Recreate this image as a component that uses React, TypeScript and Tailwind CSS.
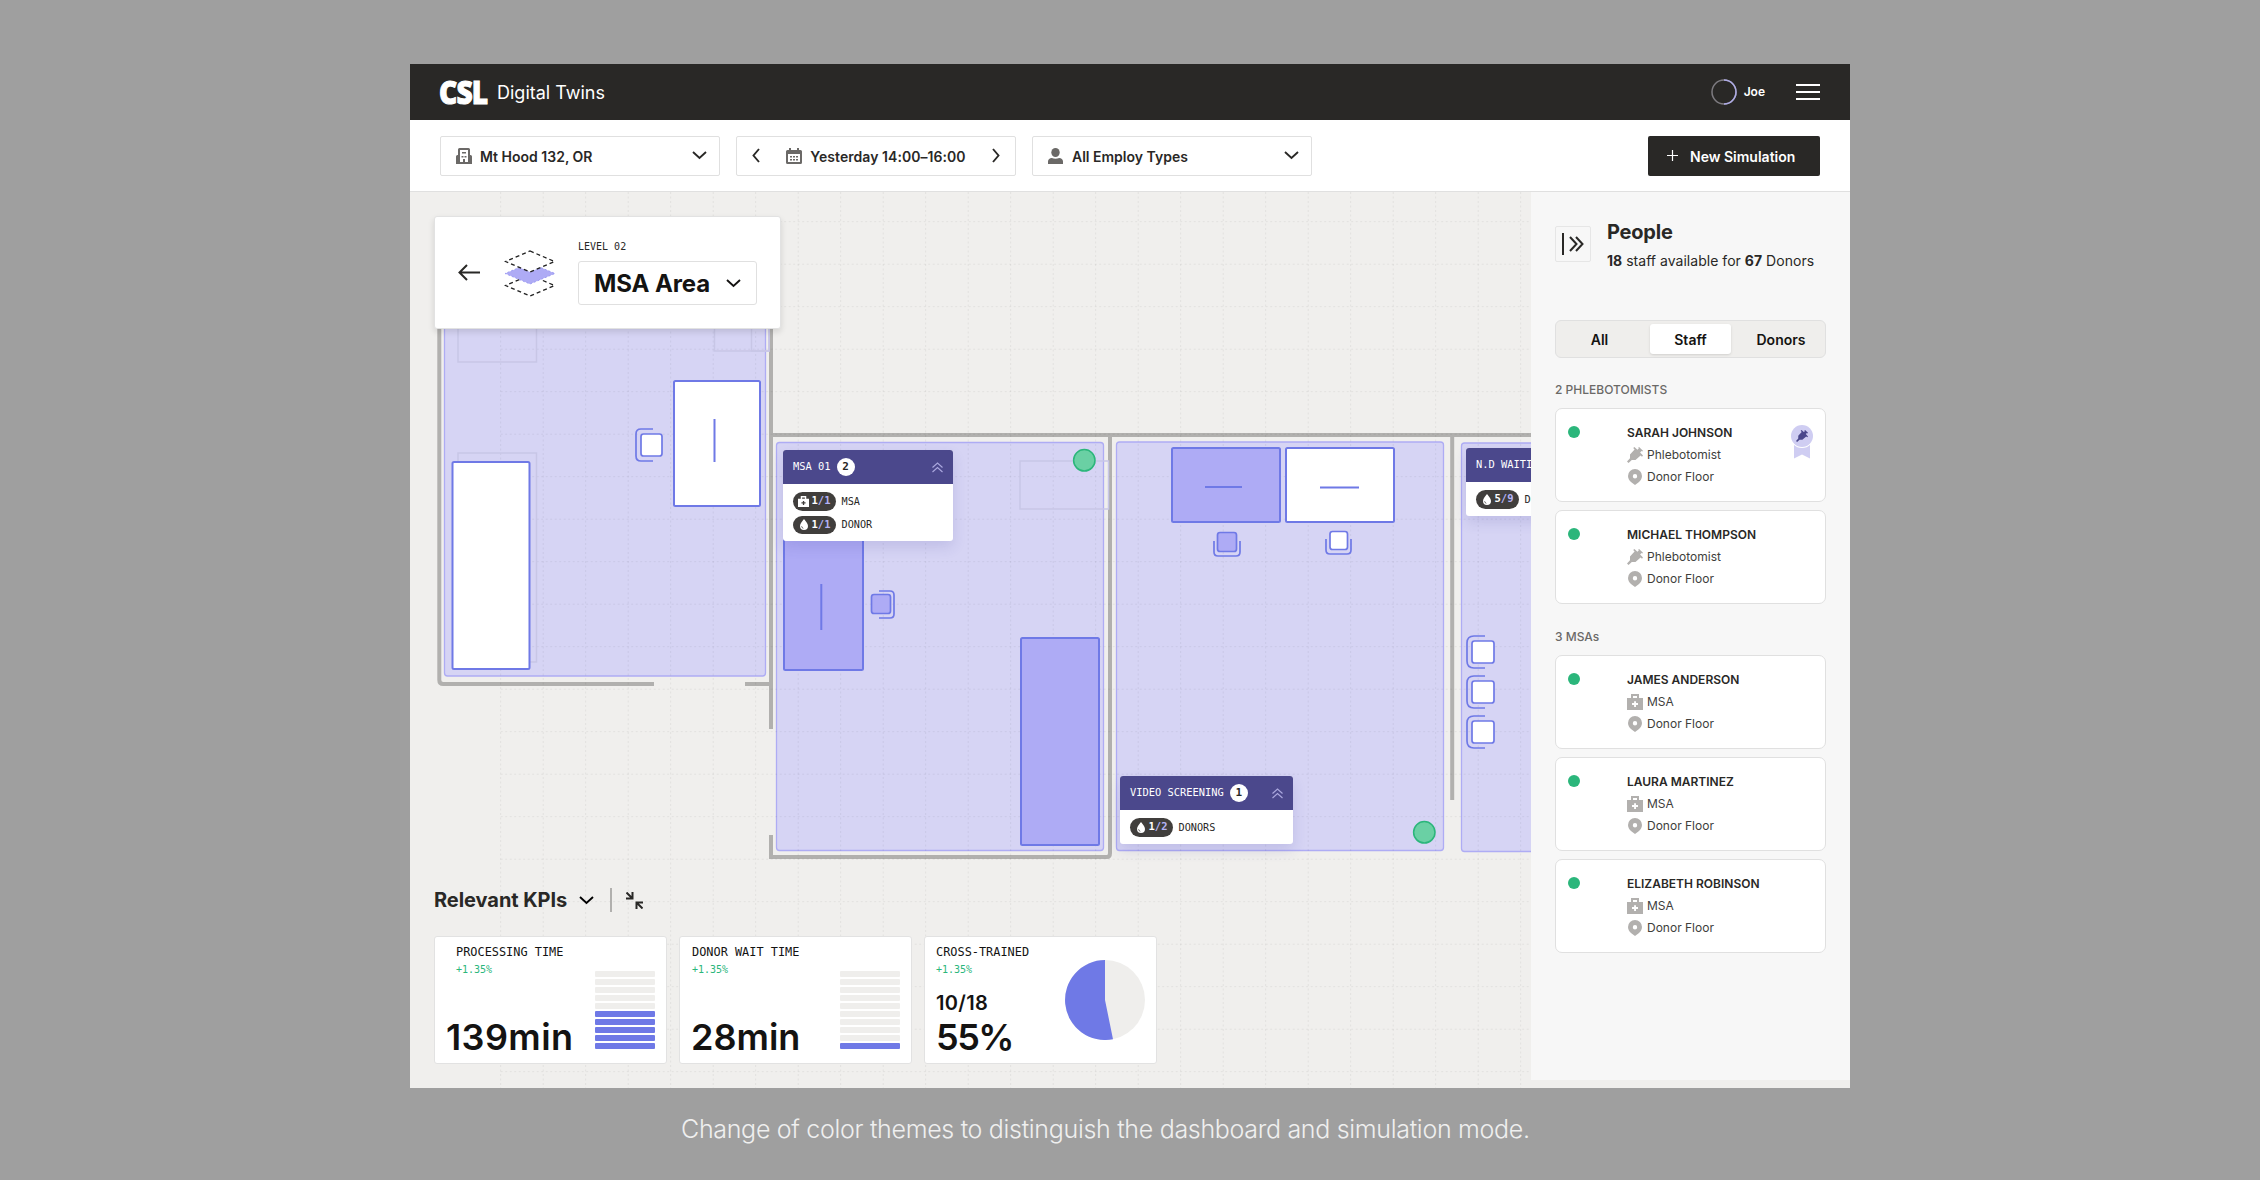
import type { ReactNode } from "react";

const MONO = "font-['DejaVu_Sans_Mono',monospace]";

/* ---------- icons ---------- */

function Chevron({ className = "", d = "M1 1l6.5 6L14 1" }: { className?: string; d?: string }) {
  return (
    <svg className={className} width="15" height="9" viewBox="0 0 15 9" fill="none" stroke="currentColor" strokeWidth="1.900">
      <path d={d} />
    </svg>
  );
}

function BuildingIcon() {
  return (
    <svg width="16" height="16" viewBox="0 0 16 16" fill="#6b6967">
      <path fillRule="evenodd" d="M3.500 0h9A1.500 1.500 0 0 1 14 1.500V7h.5A1.500 1.500 0 0 1 16 8.500V16H0V8.500A1.500 1.500 0 0 1 1.500 7H2V1.500A1.500 1.500 0 0 1 3.500 0zM4 2v12h3v-3h2v3h3V2H4z" />
      <path d="M6 4h4v1.500H6zM5.500 8h2v1.500h-2zM8.500 8h2v1.500h-2z" />
    </svg>
  );
}

function CalendarIcon() {
  return (
    <svg width="16" height="16" viewBox="0 0 16 16" fill="#6b6967">
      <path fillRule="evenodd" d="M3 0h2v2h6V0h2v2h1.500A1.500 1.500 0 0 1 16 3.500v11a1.500 1.500 0 0 1-1.500 1.500h-13A1.500 1.500 0 0 1 0 14.500v-11A1.500 1.500 0 0 1 1.500 2H3V0zM2 6v8h12V6H2z" />
      <path d="M4 8h2v1.500H4zM7 8h2v1.500H7zM10 8h2v1.500h-2zM4 11h2v1.500H4zM7 11h2v1.500H7zM10 11h2v1.500h-2z" />
    </svg>
  );
}

function PersonIcon() {
  return (
    <svg width="15" height="16" viewBox="0 0 15 16" fill="#6b6967">
      <ellipse cx="7.500" cy="4.500" rx="4.200" ry="4.500" />
      <path d="M0 16v-2.500C0 11.300 1.800 10 3.800 10q3.700 1.600 7.400 0c2 0 3.800 1.300 3.800 3.500V16H0z" />
    </svg>
  );
}

function SyringeIcon({ size = 16, color = "#b2b0ae" }: { size?: number; color?: string }) {
  return (
    <svg width={size} height={size} viewBox="0 0 16 16" fill={color}>
      <path d="M6.200 1l1.200-1 3 2.800L11.800 1.500l-.6-.8.9-.7L16 3.700l-.7.900-.8-.6-1.400 1.400L16 8.500l-1 1.200-1.400-1.200L8.500 13H4.800L1.500 16 0 14.500 3 11.200V7.500L7.600 2.600z" />
    </svg>
  );
}

function PinIcon() {
  return (
    <svg width="16" height="16" viewBox="0 0 16 16" fill="#b2b0ae">
      <path fillRule="evenodd" d="M8 0a7 7 0 0 1 7 7c0 2.600-1.400 4.600-3.300 6.200L8 16l-3.700-2.800C2.400 11.600 1 9.600 1 7a7 7 0 0 1 7-7zm0 5a2.200 2.200 0 1 0 0 4.400A2.200 2.200 0 0 0 8 5z" />
    </svg>
  );
}

function KitIcon({ size = 16, color = "#b2b0ae" }: { size?: number; color?: string }) {
  return (
    <svg width={size} height={size} viewBox="0 0 16 16" fill={color}>
      <path fillRule="evenodd" d="M4 0h8v4h4v12H0V4h4V0zm2 2v2h4V2H6zm1.100 5.200V9H5v2h2.100v2H9v-2h2V9H9V7.200H7.100z" />
    </svg>
  );
}

function DropIcon() {
  return (
    <svg width="8" height="11" viewBox="0 0 8 11" fill="#fff">
      <path d="M4 0c1.800 2.300 4 4.600 4 7a4 4 0 0 1-8 0c0-2.400 2.200-4.700 4-7z" />
      <path d="M1.600 7.300c.1 1 .7 1.700 1.700 2" fill="none" stroke="#403e3c" strokeWidth=".8" />
    </svg>
  );
}

function BadgeIcon() {
  return (
    <svg width="22" height="34" viewBox="0 0 22 34">
      <path d="M3 20h16v13.500l-8-4-8 4z" fill="#cfcdf2" />
      <circle cx="11" cy="11" r="12" fill="#fff" />
      <circle cx="11" cy="11" r="11" fill="#cfcdf2" />
      <g transform="translate(5 5)">
        <SyringeIcon size={12} color="#4b488c" />
      </g>
    </svg>
  );
}

function LayersIcon() {
  return (
    <svg width="52" height="48" viewBox="0 0 52 48" fill="none">
      <path d="M26 26L50.500 36.500 26 47 1.500 36.500z" stroke="#222" strokeWidth="1.300" strokeDasharray="4 3" />
      <path d="M26 14L51 24.500 26 35 1 24.500z" fill="#aeabf5" stroke="#908ff0" strokeWidth=".8" strokeDasharray="2 2" />
      <path d="M26 2L50.500 12.500 26 23 1.500 12.500z" fill="#fff" stroke="#222" strokeWidth="1.300" strokeDasharray="4 3" />
    </svg>
  );
}

/* ---------- header ---------- */

function Header() {
  return (
    <header className="flex h-14 items-center bg-[#292826] pr-[30px] pl-[29px] text-white">
      <span className="-mt-px w-[51px] origin-left scale-x-[0.88] font-['Open_Sans',sans-serif] text-[32px] leading-none font-extrabold tracking-[-1px] [-webkit-text-stroke:1px_white]">
        CSL
      </span>
      <span className="ml-[7px] text-[18px]">Digital Twins</span>
      <div className="ml-auto flex items-center">
        <svg width="26" height="26" viewBox="0 0 26 26" fill="none" strokeWidth="1.500">
          <circle cx="13" cy="13" r="12" stroke="#7d7b80" />
          <path d="M13 1a12 12 0 0 1 0 24" stroke="#aeabe6" />
        </svg>
        <span className="ml-[7px] text-[12px] font-semibold">Joe</span>
        <div className="ml-[31px] flex w-6 flex-col gap-[5px]">
          <i className="h-0.5 bg-white" />
          <i className="h-0.5 bg-white" />
          <i className="h-0.5 bg-white" />
        </div>
      </div>
    </header>
  );
}

function Field({ children }: { children: ReactNode }) {
  return (
    <div className="flex h-10 w-[280px] items-center rounded-xs border border-[#e0e0e0] px-[15px] text-[14px] font-semibold text-[#292826]">
      {children}
    </div>
  );
}

function Toolbar() {
  return (
    <div className="flex h-[72px] items-center gap-4 border-b border-[#e0e0e0] bg-white px-[30px]">
      <Field>
        <BuildingIcon />
        <span className="mt-px ml-2">Mt Hood 132, OR</span>
        <Chevron className="ml-auto -mr-[3px]" />
      </Field>
      <Field>
        <svg width="8" height="15" viewBox="0 0 8 15" fill="none" stroke="currentColor" strokeWidth="1.900">
          <path d="M7 1L1.500 7.500 7 14" />
        </svg>
        <div className="flex flex-1 items-center justify-center gap-2">
          <CalendarIcon />
          <span className="mt-px tracking-[0.050px]">Yesterday 14:00–16:00</span>
        </div>
        <svg width="8" height="15" viewBox="0 0 8 15" fill="none" stroke="currentColor" strokeWidth="1.900">
          <path d="M1 1l5.500 6.500L1 14" />
        </svg>
      </Field>
      <Field>
        <PersonIcon />
        <span className="mt-px ml-[9px]">All Employ Types</span>
        <Chevron className="ml-auto -mr-[3px]" />
      </Field>
      <button className="ml-auto flex h-10 w-[172px] items-center rounded-xs bg-[#292826] pl-[19px] text-[14px] font-semibold text-white">
        <svg width="11" height="11" viewBox="0 0 11 11" stroke="#fff" strokeWidth="1.200">
          <path d="M5.500 0v11M0 5.500h11" />
        </svg>
        <span className="mt-px ml-3">New Simulation</span>
      </button>
    </div>
  );
}

/* ---------- floor plan ---------- */

type Box = { x: number; y: number; w: number; h: number; filled?: boolean };

const ROOMS: Box[] = [
  { x: 34.500, y: 80, w: 321, h: 404 },
  { x: 366.500, y: 250.500, w: 327, h: 408 },
  { x: 706.500, y: 250, w: 327, h: 408.500 },
  { x: 1051.500, y: 251, w: 200, h: 408.500 },
];

const GHOSTS: Box[] = [
  { x: 48, y: 90, w: 78.500, h: 80 },
  { x: 48, y: 261, w: 78.500, h: 209 },
  { x: 304.500, y: 90, w: 54.500, h: 69 },
  { x: 341.500, y: 90, w: 17.500, h: 69 },
  { x: 610, y: 269, w: 88.500, h: 48 },
];

const TABLES: Box[] = [
  { x: 264, y: 189, w: 86, h: 125 },
  { x: 42.500, y: 270, w: 77, h: 207 },
  { x: 374, y: 330, w: 79, h: 148, filled: true },
  { x: 611, y: 446, w: 78, h: 207, filled: true },
  { x: 762, y: 256, w: 108, h: 74, filled: true },
  { x: 876, y: 256, w: 108, h: 74 },
];

const CHAIRS: { seat: Box; back: string }[] = [
  { seat: { x: 231, y: 242, w: 21, h: 22 }, back: "M243 237h-12q-5 0-5 5v22q0 5 5 5h12" },
  { seat: { x: 461.500, y: 402.500, w: 19, h: 19, filled: true }, back: "M469 399h11q4 0 4 4v19q0 4-4 4h-11" },
  { seat: { x: 807.500, y: 340.500, w: 19, h: 19, filled: true }, back: "M804 349v11q0 4 4 4h18q4 0 4-4v-11" },
  { seat: { x: 920, y: 339.500, w: 17.500, h: 18 }, back: "M916 347v11q0 4 4 4h17q4 0 4-4v-11" },
  { seat: { x: 1062, y: 449, w: 22, h: 22 }, back: "M1075 444h-11q-7 0-7 7v18q0 7 7 7h11" },
  { seat: { x: 1062, y: 489, w: 22, h: 22 }, back: "M1075 484h-11q-7 0-7 7v18q0 7 7 7h11" },
  { seat: { x: 1062, y: 529, w: 22, h: 22 }, back: "M1075 524h-11q-7 0-7 7v18q0 7 7 7h11" },
];

// origin is the top-left corner of the canvas below the toolbar
function FloorPlan() {
  const cols = Array.from({ length: 32 }, (_, i) => 90.700 + i * 42.500);
  const rows = Array.from({ length: 21 }, (_, i) => 29.700 + i * 42.500);
  return (
    <svg className="absolute inset-0" width="1440" height="896" viewBox="0 0 1440 896" fill="none">
      <g stroke="#b1b0ae" strokeWidth="4">
        <path d="M29.300 80v408q0 4 4 4H244M335 492h24M361 80v457M361 643v22h336q3 0 3-4V243" />
        <path d="M361 243h760M1042.200 243v365" />
      </g>
      <g fill="#d6d4f4" stroke="#aeacf4" strokeWidth="1.300">
        {ROOMS.map((r) => (
          <rect key={r.x} x={r.x} y={r.y} width={r.w} height={r.h} rx="3" />
        ))}
      </g>
      <g stroke="#000" strokeOpacity=".06" strokeDasharray="2 2.500">
        {cols.map((x) => (
          <path key={x} d={`M${x} 0V896`} />
        ))}
        {rows.map((y) => (
          <path key={y} d={`M90.700 ${y}H1408`} />
        ))}
      </g>
      <g stroke="#c8c6e6" strokeWidth="1.500">
        {GHOSTS.map((r, i) => (
          <rect key={i} x={r.x} y={r.y} width={r.w} height={r.h} />
        ))}
      </g>
      <g stroke="#6f79e6" strokeWidth="2">
        {TABLES.map((r, i) => (
          <rect key={i} x={r.x} y={r.y} width={r.w} height={r.h} rx="1.500" fill={r.filled ? "#aeabf5" : "#fff"} />
        ))}
        <path d="M304.500 227v43M411.300 392v46M795 295h37M910 295.500h39" />
      </g>
      {CHAIRS.map(({ seat, back }, i) => (
        <g key={i} stroke="#6f79e6" strokeWidth="1.700">
          <rect x={seat.x} y={seat.y} width={seat.w} height={seat.h} rx="2.500" fill={seat.filled ? "#aeabf5" : "#fff"} />
          <path d={back} />
        </g>
      ))}
      <g fill="#6ad0a4" stroke="#2bb67b" strokeWidth="1.500">
        <circle cx="674.300" cy="268.300" r="10.700" />
        <circle cx="1014.300" cy="640.300" r="10.700" />
      </g>
    </svg>
  );
}

interface RoomCardProps {
  className: string;
  title: string;
  count?: number;
  rows: { icon: "kit" | "drop"; used: number; total: number; label: string }[];
}

function RoomCard({ className, title, count, rows }: RoomCardProps) {
  return (
    <div className={`absolute overflow-hidden rounded-[3px] bg-white shadow-[0_6px_14px_rgba(60,56,150,0.14)] ${className}`}>
      <div className={`flex h-[34px] items-center bg-[#4b488c] pr-[10px] pl-[10px] text-[10.400px] whitespace-nowrap text-white ${MONO}`}>
        {title}
        {count !== undefined && (
          <span className="ml-[6px] flex size-[18px] shrink-0 items-center justify-center rounded-full bg-white text-[11px] font-bold text-[#292826]">
            {count}
          </span>
        )}
        <svg className="ml-auto shrink-0" width="11" height="11" viewBox="0 0 11 11" fill="none" stroke="#a9a6dd" strokeWidth="1.200">
          <path d="M.5 5.500l5-4.500 5 4.500M.5 10l5-4.500 5 4.500" />
        </svg>
      </div>
      <div className="flex flex-col gap-[5px] px-[10px] py-2">
        {rows.map((row) => (
          <div key={row.label} className={`flex items-center whitespace-nowrap ${MONO}`}>
            <span className="flex h-[18.500px] w-[42.500px] items-center rounded-full bg-[#403e3c] pl-[5px] text-[10.500px] font-bold text-white">
              <span className="mr-[2.500px] flex w-[11px] justify-center">
                {row.icon === "kit" ? <KitIcon size={11} color="#fff" /> : <DropIcon />}
              </span>
              {row.used}<span className="text-[#b5b2f5]">/{row.total}</span>
            </span>
            <span className="ml-[6px] text-[10.200px] text-[#292826]">{row.label}</span>
          </div>
        ))}
      </div>
    </div>
  );
}

function LevelCard() {
  return (
    <div className="relative flex h-[113px] w-[347px] items-center rounded-[3px] border border-[#e2e2e2] bg-white shadow-[0_3px_6px_rgba(0,0,0,0.12)]">
      <svg className="ml-[23px]" width="22" height="17" viewBox="0 0 22 17" fill="none" stroke="#292826" strokeWidth="2">
        <path d="M22 8.500H1.500M9 1L1.500 8.500 9 16" />
      </svg>
      <div className="ml-[24px]">
        <LayersIcon />
      </div>
      <div className="ml-[22px] pt-px">
        <div className={`text-[10px] leading-3 text-[#292826] ${MONO}`}>LEVEL 02</div>
        <button className="mt-2 flex h-11 w-[179px] items-center rounded-[3px] border border-[#e0e0e0] pt-px pl-[15px] text-[24px] font-bold whitespace-nowrap text-[#141312]">
          <span className="tracking-[-0.100px]">MSA Area</span>
          <Chevron className="ml-[16px]" />
        </button>
      </div>
    </div>
  );
}

/* ---------- KPIs ---------- */

function KpiHead({ label, className = "" }: { label: string; className?: string }) {
  return (
    <div className={`${MONO} ${className}`}>
      <div className="text-[11.900px] leading-4 text-[#141312]">{label}</div>
      <div className="mt-[2px] text-[10px] leading-4 text-[#2bb67b]">+1.35%</div>
    </div>
  );
}

function KpiValue({ children, className = "" }: { children: ReactNode; className?: string }) {
  return (
    <span className={`ml-[11px] text-[36px] leading-[50px] font-semibold text-[#141312] ${className}`}>
      {children}
    </span>
  );
}

function Bars({ active }: { active: number }) {
  return (
    <div className="flex w-[60px] flex-col gap-[2px]">
      {Array.from({ length: 10 }, (_, i) => (
        <div key={i} className={`h-[6px] rounded-[1px] ${i >= 10 - active ? "bg-[#6f79e6]" : "bg-[#efeeec]"}`} />
      ))}
    </div>
  );
}

function KpiCard({ children }: { children: ReactNode }) {
  return (
    <div className="flex h-[128px] w-[233px] justify-between rounded-[3px] border border-[#e2e2e2] bg-white">{children}</div>
  );
}

function Kpis() {
  return (
    <section>
      <div className="flex h-6 items-center">
        <h2 className="text-[20px] font-bold tracking-[-0.050px] text-[#292826]">Relevant KPIs</h2>
        <Chevron className="ml-3" />
        <div className="ml-4 h-6 w-[1.500px] bg-[#b1b0ae]" />
        <svg className="ml-[14px]" width="17" height="17" viewBox="0 0 17 17" fill="none" stroke="#292826" strokeWidth="2">
          <path d="M.5.5l5 5M6.500 0v6.500H0M16.500 16.500l-5-5M10.500 17v-6.500H17" />
        </svg>
      </div>
      <div className="mt-6 flex gap-3">
        <KpiCard>
          <div className="flex flex-col">
            <KpiHead className="mt-[7px] ml-[21px]" label="PROCESSING TIME" />
            <KpiValue className="mt-[34px] tracking-[0.400px]">139min</KpiValue>
          </div>
          <div className="mt-[34px] mr-[11px]">
            <Bars active={5} />
          </div>
        </KpiCard>
        <KpiCard>
          <div className="flex flex-col">
            <KpiHead className="mt-[7px] ml-[12px]" label="DONOR WAIT TIME" />
            <KpiValue className="mt-[34px]">28min</KpiValue>
          </div>
          <div className="mt-[34px] mr-[11px]">
            <Bars active={1} />
          </div>
        </KpiCard>
        <KpiCard>
          <div className="flex flex-col">
            <KpiHead className="mt-[7px] ml-[11px]" label="CROSS-TRAINED" />
            <span className="mt-[13px] ml-[11px] text-[20px] leading-6 font-semibold tracking-[0.300px] text-[#141312]">10/18</span>
            <KpiValue className="mt-[-3px] tracking-[-1.500px]">55%</KpiValue>
          </div>
          <svg className="mt-[23px] mr-[11px]" width="80" height="80" viewBox="0 0 80 80">
            <circle cx="40" cy="40" r="40" fill="#efeeec" />
            <path d="M40 40V0a40 40 0 1 0 8 79.200z" fill="#6f79e6" />
          </svg>
        </KpiCard>
      </div>
    </section>
  );
}

/* ---------- people ---------- */

const GROUPS = [
  {
    title: "2 PHLEBOTOMISTS",
    role: "Phlebotomist",
    people: [
      { name: "SARAH JOHNSON", badge: true },
      { name: "MICHAEL THOMPSON", badge: false },
    ],
  },
  {
    title: "3 MSAs",
    role: "MSA",
    people: [
      { name: "JAMES ANDERSON", badge: false },
      { name: "LAURA MARTINEZ", badge: false },
      { name: "ELIZABETH ROBINSON", badge: false },
    ],
  },
];

function PersonCard({ name, role, badge }: { name: string; role: string; badge: boolean }) {
  return (
    <div className="flex h-[94px] w-[271px] rounded-[7px] border border-[#e0e0e0] bg-white pt-[13px] pr-[12px] pl-[12px] text-[12px] text-[#403e3c]">
      <div className="mt-1 size-3 rounded-full bg-[#2bb67b]" />
      <div className="ml-[47px] flex flex-col">
        <div className="h-[22px] leading-[22px] font-semibold text-[#292826]">{name}</div>
        <div className="flex h-[22px] items-center gap-1">
          {role === "MSA" ? <KitIcon /> : <SyringeIcon />}
          {role}
        </div>
        <div className="flex h-[22px] items-center gap-1">
          <PinIcon />
          Donor Floor
        </div>
      </div>
      {badge && (
        <div className="mt-[3px] ml-auto">
          <BadgeIcon />
        </div>
      )}
    </div>
  );
}

function PeoplePanel() {
  return (
    <aside className="relative h-[888px] w-[319px] bg-[#f7f7f7] pl-6 text-[#292826]">
      <div className="flex pt-[27px]">
        <button className="mt-[7px] flex h-9 w-9 items-center justify-center rounded-[2px] border border-[#e6e6e6]">
          <svg width="22" height="22" viewBox="0 0 22 22" fill="none" stroke="#292826" strokeWidth="2">
            <path d="M1 0v22M8 4l6.500 7L8 18M14 4l6.500 7L14 18" />
          </svg>
        </button>
        <div className="ml-4">
          <h2 className="text-[20px] leading-[26px] font-bold tracking-[-0.200px]">People</h2>
          <p className="mt-[6px] text-[14px] leading-5 tracking-[0.030px] whitespace-nowrap">
            <b className="font-bold">18</b> staff available for <b className="font-bold">67</b> Donors
          </p>
        </div>
      </div>
      <div className="mt-[49px] flex h-[38px] w-[271px] rounded-[6px] border border-[#e0e0e0] bg-[#efeeec] p-[3px] text-[14px] leading-[31px] font-semibold text-[#141312]">
        <span className="w-[91px] pr-[10px] text-center">All</span>
        <span className="w-[81px] rounded-[3px] bg-white text-center shadow-sm">Staff</span>
        <span className="flex-1 pl-[9px] text-center">Donors</span>
      </div>
      {GROUPS.map((group, i) => (
        <div key={group.title} className={i === 0 ? "mt-6" : "mt-[25px]"}>
          <div className="h-4 text-[12px] leading-4 font-medium text-[#6b6967]">{group.title}</div>
          <div className="mt-[10px] flex flex-col gap-2">
            {group.people.map((p) => (
              <PersonCard key={p.name} name={p.name} role={group.role} badge={p.badge} />
            ))}
          </div>
        </div>
      ))}
    </aside>
  );
}

/* ---------- page ---------- */

export default function App() {
  return (
    <div className="flex h-[1180px] w-[2260px] flex-col overflow-hidden bg-[#9f9f9f] pt-16 font-['Inter',sans-serif]">
      <div className="ml-[410px] w-[1440px]">
        <Header />
        <Toolbar />
        <main className="relative flex h-[896px] justify-between bg-[#f0efed]">
          <div className="relative h-full w-[1121px] overflow-hidden">
            <FloorPlan />
            <RoomCard
              className="top-[258px] left-[373px] h-[91px] w-[170px]"
              title="MSA 01"
              count={2}
              rows={[
                { icon: "kit", used: 1, total: 1, label: "MSA" },
                { icon: "drop", used: 1, total: 1, label: "DONOR" },
              ]}
            />
            <RoomCard
              className="top-[584px] left-[710px] h-[68px] w-[173px]"
              title="VIDEO SCREENING"
              count={1}
              rows={[{ icon: "drop", used: 1, total: 2, label: "DONORS" }]}
            />
            <RoomCard
              className="top-[256px] left-[1056px] h-[68px] w-[173px]"
              title="N.D WAITING"
              rows={[{ icon: "drop", used: 5, total: 9, label: "DONORS" }]}
            />
            <div className="flex h-full flex-col justify-between pt-6 pb-6 pl-6">
              <LevelCard />
              <div className="relative">
                <Kpis />
              </div>
            </div>
          </div>
          <PeoplePanel />
        </main>
      </div>
      <p className="mt-[22px] ml-[681px] text-[25px] leading-[38px] font-light tracking-[-0.310px] whitespace-nowrap text-[#efefef]">
        Change of color themes to distinguish the dashboard and simulation mode.
      </p>
    </div>
  );
}
